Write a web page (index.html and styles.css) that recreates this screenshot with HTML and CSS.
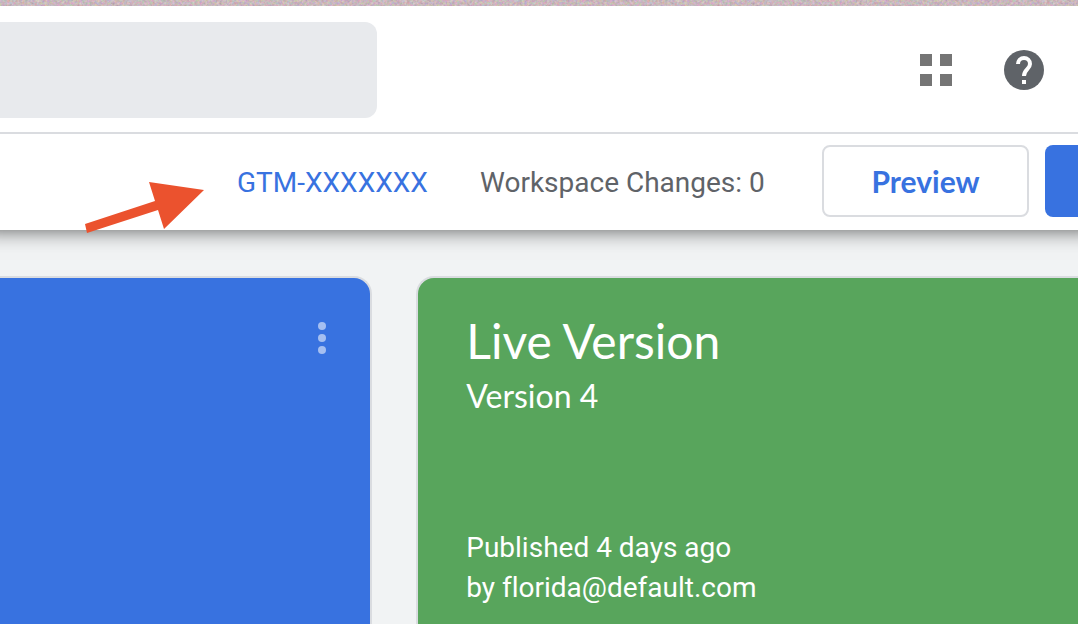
FILE: index.html
```html
<!DOCTYPE html>
<html lang="en">
<head>
    <meta charset="UTF-8">
    <meta name="viewport" content="width=device-width, initial-scale=1.0">
    <title>Workspace overview</title>
    <link rel="stylesheet" href="styles.css">
</head>
<body>
    <svg class="strip" aria-hidden="true">
        <filter id="grain" x="0" y="0" width="100%" height="100%" color-interpolation-filters="sRGB">
            <feTurbulence type="fractalNoise" baseFrequency="0.4" numOctaves="2" seed="4"/>
            <feColorMatrix values="0.3 0 0 0 0.64  0 0.3 0 0 0.57  0 0 0.3 0 0.59  0 0 0 0 1"/>
        </filter>
        <rect width="100%" height="6" filter="url(#grain)"/>
    </svg>
    <header class="header">
        <input class="search" type="search" aria-label="Search">
        <div class="header-icons">
            <button class="icon-btn" aria-label="Apps">
                <svg width="32" height="32" viewBox="0 0 32 32" fill="#757575">
                    <path d="M0 0h12v12H0zM20 0h12v12H20zM0 20h12v12H0zM20 20h12v12H20z"/>
                </svg>
            </button>
            <button class="icon-btn" aria-label="Help">
                <svg width="48" height="48" viewBox="0 0 48 48">
                    <circle cx="24" cy="24" r="20" fill="#5f6368"/>
                    <path d="M18 18a6 6 0 0 1 12 0c0 5-6 5.500-6 12" fill="none" stroke="white" stroke-width="4"/>
                    <path d="M22 34h4v4h-4z" fill="white"/>
                </svg>
            </button>
        </div>
    </header>
    <div class="toolbar">
        <a class="container-id" href="#">GTM-XXXXXXX</a>
        <span class="changes">Workspace Changes: 0</span>
        <div class="actions">
            <button class="preview">Preview</button>
            <button class="submit" aria-label="Submit"></button>
        </div>
        <svg class="arrow" width="120" height="52" viewBox="0 0 120 52" fill="#eb522e" aria-hidden="true">
            <path d="M65 1L120 9 80 48 74 29 3 52 1 43 71 20z"/>
        </svg>
    </div>
    <main class="cards">
        <section class="card card-blue">
            <button class="more" aria-label="More">
                <svg width="8" height="32" viewBox="0 0 8 32" fill="#a5bff1">
                    <circle cx="4" cy="4" r="4"/>
                    <circle cx="4" cy="16" r="4"/>
                    <circle cx="4" cy="28" r="4"/>
                </svg>
            </button>
        </section>
        <section class="card card-green">
            <h2>Live Version</h2>
            <p class="version">Version 4</p>
            <p class="published">Published 4 days ago<br>by florida@default.com</p>
        </section>
    </main>
</body>
</html>
```
FILE: styles.css
```css
* {
box-sizing: border-box;
margin: 0;
padding: 0;
}

body {
display: flex;
flex-direction: column;
height: 100vh;
overflow: hidden;
background: #f1f3f4;
color: #5f6368;
font-family: Roboto, "Liberation Sans", sans-serif;
font-size: 28px;
font-variant-ligatures: none;
line-height: 40px;
}

button {
border: none;
background: none;
font: inherit;
cursor: pointer;
}

svg {
display: block;
}

.strip {
width: 100%;
height: 6px;
flex: none;
background: #c8bcc2;
}

.header {
position: relative;
z-index: 2;
display: flex;
justify-content: space-between;
align-items: center;
flex: none;
padding: 16px 30px 14px 0;
background: white;
border-bottom: 2px solid #dadce0;
}

.search {
width: 35vw;
height: 96px;
padding: 0 24px;
border: none;
border-radius: 0 12px 12px 0;
background: #e8eaed;
font: inherit;
appearance: none;
}

.header-icons {
display: flex;
align-items: center;
gap: 48px;
}

.toolbar {
position: relative;
z-index: 1;
display: flex;
justify-content: flex-end;
align-items: center;
gap: 48px;
flex: none;
padding: 11px 0 13px;
background: white;
box-shadow: 0 -20px 20px 20px rgba(0, 0, 0, 0.65);
}

.container-id,
.changes {
padding-top: 4px;
}

.container-id {
min-width: 195px;
color: #3872e0;
text-decoration: none;
}

.changes {
min-width: 294px;
}

.actions {
display: flex;
gap: 16px;
}

.preview {
height: 72px;
min-width: 207px;
border: 2px solid #dadce0;
border-radius: 8px;
color: #3872e0;
font-family: Lato, Roboto, sans-serif;
font-size: 30px;
font-weight: 700;
}

.submit {
width: 33px;
height: 72px;
border-radius: 8px 0 0 8px;
background: #3872e0;
}

.arrow {
position: absolute;
left: 84px;
top: 47px;
}

.cards {
display: grid;
grid-template-columns: 9fr 16fr;
gap: 44px;
flex: 1;
padding-top: 46px;
}

.card {
border: 2px solid #dadce0;
border-bottom: none;
color: white;
}

.card-blue {
display: flex;
justify-content: flex-end;
align-items: flex-start;
padding: 44px;
border-left: none;
border-radius: 0 18px 0 0;
background: #3872e0;
}

.card-green {
padding: 32px 48px;
border-right: none;
border-radius: 18px 0 0 0;
background: #58a55c;
}

.card h2 {
font-family: Lato, Roboto, sans-serif;
font-size: 48px;
font-weight: 400;
line-height: 62px;
}

.version {
font-family: Lato, Roboto, sans-serif;
font-size: 32px;
line-height: 48px;
}

.published {
margin-top: 108px;
}
```
